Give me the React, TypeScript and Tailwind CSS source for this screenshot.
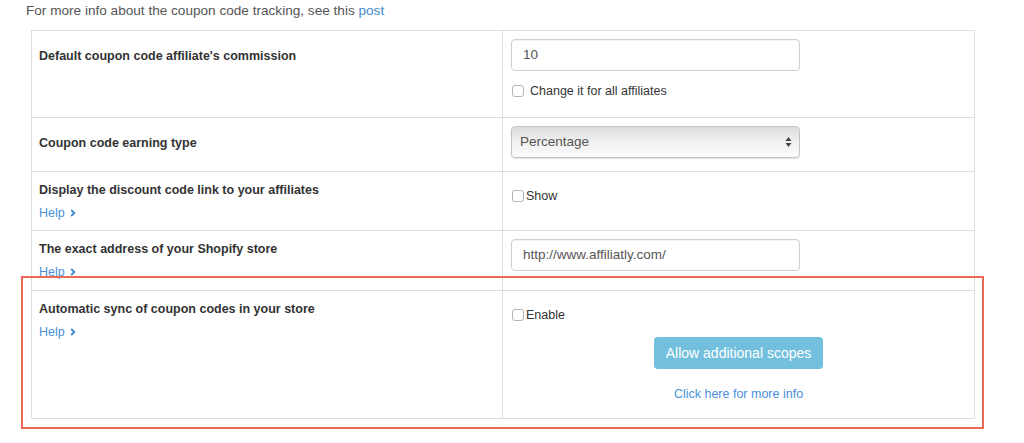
const font = { fontFamily: '"Liberation Sans", Helvetica, Arial, sans-serif' }

function Chevron() {
  return (
    <svg width="6" height="8" viewBox="0 0 6 8" className="ml-[5px] inline-block">
      <path d="M1.2 1 L4.3 4 L1.2 7" fill="none" stroke="#428bca" strokeWidth="1.9" />
    </svg>
  )
}

function Help() {
  return (
    <a className="mt-[5px] flex items-center text-[12.5px] leading-[18px] text-[#4a90d9]">
      Help
      <Chevron />
    </a>
  )
}

function Box() {
  return <span className="inline-block h-[12px] w-[12px] shrink-0 rounded-[3px] border border-[#b5b5b5] bg-white" />
}

function Label({ children }: { children: React.ReactNode }) {
  return <div className="text-[12.5px] font-bold leading-[18px] text-[#333]">{children}</div>
}

function TextInput({ value }: { value: string }) {
  return (
    <div className="flex h-[32px] w-[289px] items-center rounded-[4px] border border-[#cfcfcf] bg-white px-[11px] text-[13.5px] text-[#555] shadow-[inset_0_1px_1px_rgba(0,0,0,0.05)]">
      {value}
    </div>
  )
}

export default function App() {
  return (
    <div style={font} className="relative h-[443px] w-[1024px] overflow-hidden bg-white">
      <p className="pl-[26px] pt-[1px] text-[13.6px] leading-[20px] text-[#555]">
        For more info about the coupon code tracking, see this <a className="text-[#428bca]">post</a>
      </p>

      <div className="ml-[31px] mt-[9px] grid w-[944px] grid-cols-[471px_1fr] border border-[#dedede]">
        {/* row 1 */}
        <div className="h-[87px] border-r border-b border-[#dedede] pl-[7px] pt-[16px]">
          <Label>Default coupon code affiliate's commission</Label>
        </div>
        <div className="h-[87px] border-b border-[#dedede] pl-[8px] pt-[8px]">
          <TextInput value="10" />
          <label className="mt-[11px] flex items-center gap-[6px] pl-[1px] text-[12.5px] leading-[18px] text-[#333]">
            <Box />
            Change it for all affiliates
          </label>
        </div>

        {/* row 2 */}
        <div className="h-[54px] border-r border-b border-[#dedede] pl-[7px] pt-[16px]">
          <Label>Coupon code earning type</Label>
        </div>
        <div className="h-[54px] border-b border-[#dedede] pl-[8px] pt-[8px]">
          <div className="flex h-[32px] w-[289px] items-center justify-between rounded-[4px] border border-[#c4c4c4] bg-gradient-to-b from-[#dcdcdc] via-[#f1f1f1] to-[#fbfbfb] pl-[8px] pr-[7px] text-[13.5px] text-[#555] shadow-[0_1px_1px_rgba(0,0,0,0.12)]">
            Percentage
            <svg width="7" height="12" viewBox="0 0 7 12">
              <path d="M3.5 1 L6.5 5 L0.5 5 Z" fill="#444" />
              <path d="M3.5 11 L6.5 7 L0.5 7 Z" fill="#444" />
            </svg>
          </div>
        </div>

        {/* row 3 */}
        <div className="h-[59px] border-r border-b border-[#dedede] pl-[7px] pt-[9px]">
          <Label>Display the discount code link to your affiliates</Label>
          <Help />
        </div>
        <div className="h-[59px] border-b border-[#dedede] pl-[8px] pt-[15px]">
          <label className="flex items-center gap-[2px] pl-[1px] text-[12.5px] leading-[18px] text-[#333]">
            <Box />
            Show
          </label>
        </div>

        {/* row 4 */}
        <div className="h-[60px] border-r border-b border-[#dedede] pl-[7px] pt-[9px]">
          <Label>The exact address of your Shopify store</Label>
          <Help />
        </div>
        <div className="h-[60px] border-b border-[#dedede] pl-[8px] pt-[8px]">
          <TextInput value="http://www.affiliatly.com/" />
        </div>

        {/* row 5 */}
        <div className="h-[127px] border-r border-[#dedede] pl-[7px] pt-[9px]">
          <Label>Automatic sync of coupon codes in your store</Label>
          <Help />
        </div>
        <div className="flex h-[127px] flex-col pt-[15px]">
          <label className="flex items-center gap-[2px] pl-[9px] text-[12.5px] leading-[18px] text-[#333]">
            <Box />
            Enable
          </label>
          <div className="mt-[13px] flex flex-col items-center">
            <button className="h-[32px] rounded-[4px] bg-[#72c0dd] px-[12px] text-[14px] text-white">
              Allow additional scopes
            </button>
            <a className="mt-[16px] text-[12.5px] leading-[18px] text-[#4a90d9]">Click here for more info</a>
          </div>
        </div>
      </div>

      <div className="pointer-events-none absolute left-[21px] top-[276px] h-[153px] w-[963px] border-2 border-[#ec6a55]" />
    </div>
  )
}
